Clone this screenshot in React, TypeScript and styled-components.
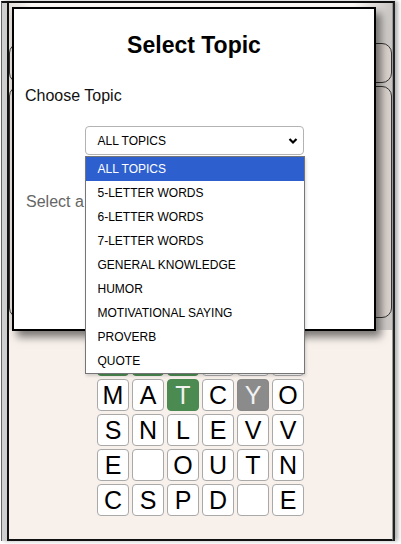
import styled, { createGlobalStyle } from 'styled-components'

type TileState = 'hit' | 'near' | 'blank'

const Global = createGlobalStyle`
  html, body {
    margin: 0;
    padding: 0;
    background: #fff;
  }
  body {
    font-family: "Liberation Sans", Arial, sans-serif;
  }
`

const Page = styled.div`
  position: relative;
  width: 401px;
  height: 544px;
  padding: 1px 0 0 1px;
  box-sizing: border-box;
  overflow: hidden;
`

const Frame = styled.div`
  width: 394px;
  height: 540px;
  box-sizing: border-box;
  border-top: 2px solid #111;
  border-right: 2px solid #222;
  border-left: 1px solid #666;
  padding-left: 5px;
  display: flex;
  flex-direction: column;
  background: linear-gradient(90deg, #cfcfcf, #f2f2f2 70%);
  box-shadow: 3px 0 4px rgba(0, 0, 0, 0.3);
`

const Game = styled.div`
  flex: 1;
  display: flex;
  flex-direction: column;
  border-left: 2px solid #111;
  border-right: 1px solid #999;
  border-bottom: 2px solid #111;
  background: #f7f0eb;
`

const Header = styled.div`
  height: 327px;
  padding-top: 40px;
  box-sizing: border-box;
  display: flex;
  flex-direction: column;
  gap: 3px;
  background: linear-gradient(90deg, #e2ddd9, #fbf8f6 6%, #fbf8f6 90%, #c9c5c2);
`

const HeadBar = styled.div<{ $h: number }>`
  height: ${({ $h }) => $h}px;
  box-sizing: border-box;
  border: 1px solid #333;
  border-radius: 10px;
  background: linear-gradient(90deg, #e4ddd8, #f3eeea 50%, #d8d0cb);
`

const Board = styled.div`
  flex: 1;
  display: flex;
  justify-content: center;
  padding-top: 14px;
`

const Grid = styled.div`
  display: grid;
  grid-template-columns: repeat(6, 32px);
  grid-auto-rows: 32px;
  gap: 3px;
  align-content: start;
`

const Tile = styled.div<{ $state: TileState }>`
  box-sizing: border-box;
  border: 1px solid ${({ $state }) => ($state === 'blank' ? '#a9a9a9' : $state === 'hit' ? '#4a8a50' : '#888')};
  border-radius: 4px;
  background: ${({ $state }) => ($state === 'hit' ? '#4b8b51' : $state === 'near' ? '#8b8b8b' : '#fff')};
  color: ${({ $state }) => ($state === 'blank' ? '#000' : '#f2f2f2')};
  display: flex;
  align-items: center;
  justify-content: center;
  font-size: 25px;
  line-height: 1;
`

const Modal = styled.div`
  position: absolute;
  left: 12px;
  top: 7px;
  width: 364px;
  height: 324px;
  box-sizing: border-box;
  border: 2px solid #000;
  background: #fff;
  box-shadow: 5px 6px 8px rgba(0, 0, 0, 0.5);
`

const Title = styled.h2`
  margin: 23px 0 0;
  font-size: 23px;
  line-height: 26px;
  font-weight: 700;
  text-align: center;
  color: #000;
`

const Label = styled.div`
  margin-top: 29px;
  padding-left: 11px;
  font-size: 16px;
  line-height: 18px;
  color: #111;
`

const SelectWrap = styled.div`
  position: relative;
  width: 219px;
  margin: 21px auto 0;
`

const SelectBox = styled.div`
  height: 29px;
  box-sizing: border-box;
  border: 1px solid #b3b3b3;
  border-radius: 4px;
  background: #fff;
  display: flex;
  align-items: center;
  justify-content: space-between;
  padding: 0 5px 0 12px;
  font-size: 12px;
  color: #000;
`

const Menu = styled.div`
  position: absolute;
  left: 0;
  top: 100%;
  margin-top: 1px;
  width: 220px;
  box-sizing: border-box;
  border: 1px solid #767676;
  background: #fff;
  box-shadow: 1px 2px 3px rgba(0, 0, 0, 0.15);
  z-index: 2;
`

const Option = styled.div<{ $active?: boolean }>`
  height: 24px;
  line-height: 24px;
  padding-left: 12px;
  font-size: 12px;
  background: ${({ $active }) => ($active ? '#2e5fcf' : 'transparent')};
  color: ${({ $active }) => ($active ? '#fff' : '#000')};
  white-space: nowrap;
`

const Hint = styled.p`
  margin: 38px 0 0;
  padding-left: 12px;
  font-size: 16px;
  line-height: 18px;
  color: #666;
`

const topics = [
  'ALL TOPICS',
  '5-LETTER WORDS',
  '6-LETTER WORDS',
  '7-LETTER WORDS',
  'GENERAL KNOWLEDGE',
  'HUMOR',
  'MOTIVATIONAL SAYING',
  'PROVERB',
  'QUOTE',
]

const rows: [string, TileState][][] = [
  [['', 'hit'], ['', 'hit'], ['', 'hit'], ['', 'blank'], ['', 'blank'], ['', 'blank']],
  [['M', 'blank'], ['A', 'blank'], ['T', 'hit'], ['C', 'blank'], ['Y', 'near'], ['O', 'blank']],
  [['S', 'blank'], ['N', 'blank'], ['L', 'blank'], ['E', 'blank'], ['V', 'blank'], ['V', 'blank']],
  [['E', 'blank'], ['', 'blank'], ['O', 'blank'], ['U', 'blank'], ['T', 'blank'], ['N', 'blank']],
  [['C', 'blank'], ['S', 'blank'], ['P', 'blank'], ['D', 'blank'], ['', 'blank'], ['E', 'blank']],
]

function Chevron() {
  return (
    <svg width="10" height="8" viewBox="0 0 10 8">
      <polyline points="1.5,2 5,5.5 8.5,2" fill="none" stroke="#000" strokeWidth="2.2" />
    </svg>
  )
}

export default function App() {
  return (
    <Page>
      <Global />
      <Frame>
        <Game>
          <Header>
            <HeadBar $h={40} />
            <HeadBar $h={232} />
          </Header>
          <Board>
            <Grid>
              {rows.flatMap((row, r) =>
                row.map(([ch, st], c) => (
                  <Tile key={`${r}-${c}`} $state={st}>
                    {ch}
                  </Tile>
                )),
              )}
            </Grid>
          </Board>
        </Game>
      </Frame>

      <Modal>
        <Title>Select Topic</Title>
        <Label>Choose Topic</Label>
        <SelectWrap>
          <SelectBox>
            <span>ALL TOPICS</span>
            <Chevron />
          </SelectBox>
          <Menu>
            {topics.map((t, i) => (
              <Option key={t} $active={i === 0}>
                {t}
              </Option>
            ))}
          </Menu>
        </SelectWrap>
        <Hint>Select a topic to play.</Hint>
      </Modal>
    </Page>
  )
}
